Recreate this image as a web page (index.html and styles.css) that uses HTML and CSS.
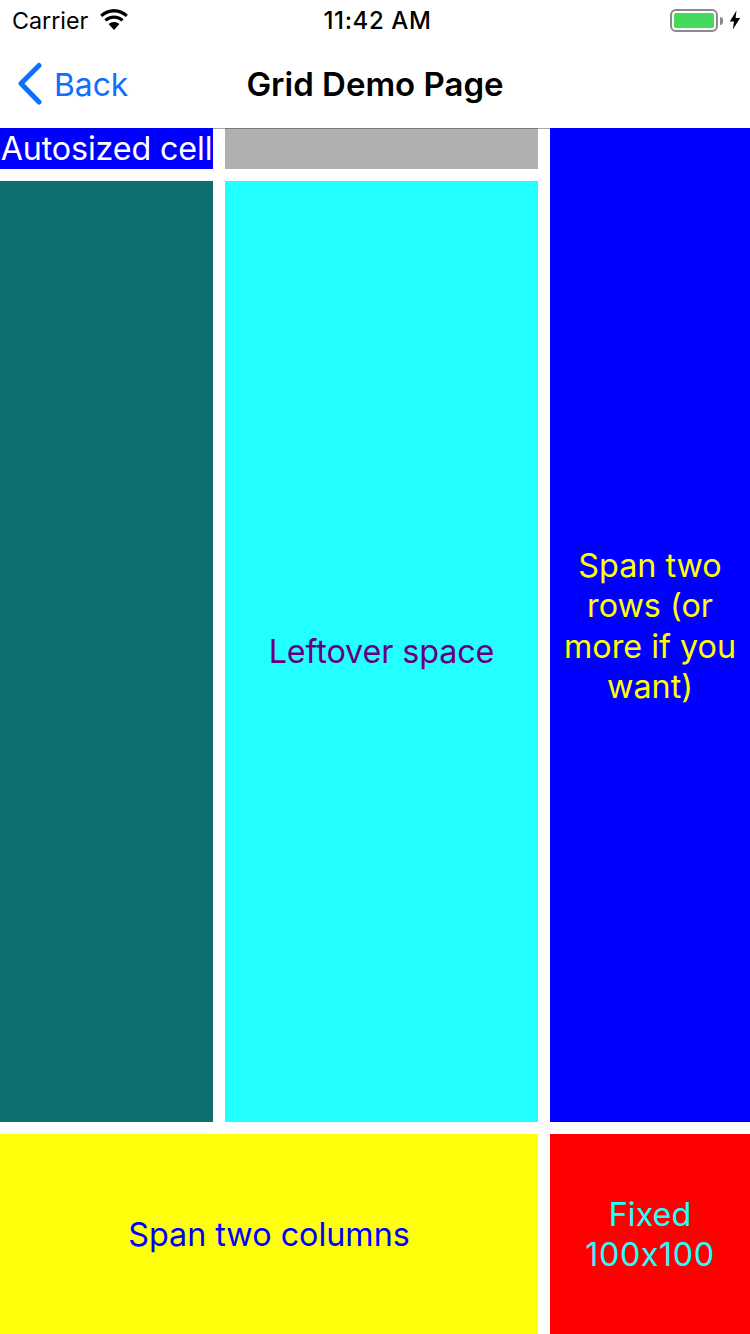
FILE: index.html
```html
<!DOCTYPE html>
<html lang="en">
<head>
<meta charset="utf-8">
<title>Grid Demo Page</title>
<link rel="stylesheet" href="styles.css">
</head>
<body>
<div class="app">
  <div class="status">
    <div class="status-left">
      <span class="carrier">Carrier</span>
      <svg class="wifi" width="28" height="21" viewBox="2 1 26 19.500"><path d="M15 4.200c4.200 0 8 1.600 10.900 4.300l2-2.200C24.300 3 19.900 1 15 1S5.700 3 2.100 6.300l2 2.200C7 5.800 10.800 4.200 15 4.200z" fill="#000"/><path d="M15 10c2.700 0 5.100 1 7 2.700l2-2.200C21.600 8.300 18.500 7 15 7s-6.600 1.300-9 3.500l2 2.200c1.900-1.700 4.300-2.700 7-2.700z" fill="#000"/><path d="M15 13c-1.900 0-3.700.7-5 1.900l5 5.600 5-5.600c-1.300-1.200-3.100-1.900-5-1.900z" fill="#000"/></svg>
    </div>
    <span class="time">11:42 AM</span>
    <div class="status-right">
      <div class="battery"><div class="battery-fill"></div></div>
      <div class="battery-cap"></div>
      <svg class="bolt" width="12" height="20" viewBox="0 0 12 20"><path d="M7.500 0.500L0.800 11.500h4.200L3.800 19.500l7.400-11.500H6.600z" fill="#000"/></svg>
    </div>
  </div>
  <nav class="nav">
    <div class="back">
      <svg class="chevron" width="28" height="44" viewBox="0 0 28 44"><path d="M24 3.500L6 21.500 24 40" fill="none" stroke="#0f6ffb" stroke-width="5" stroke-linecap="round" stroke-linejoin="round"/></svg>
      <span>Back</span>
    </div>
    <div class="title">Grid Demo Page</div>
  </nav>
  <main class="grid">
    <div class="cell auto">Autosized cell</div>
    <div class="cell gray"></div>
    <div class="cell span-rows">Span two rows (or more if you want)</div>
    <div class="cell teal"></div>
    <div class="cell leftover">Leftover space</div>
    <div class="cell span-cols">Span two columns</div>
    <div class="cell fixed"><span>Fixed <span class="dims">100x100</span></span></div>
  </main>
</div>
</body>
</html>
```
FILE: styles.css
```css
* { box-sizing: border-box; }
html, body { margin: 0; padding: 0; background: #fff; }
body { font-family: Inter, "Liberation Sans", sans-serif; font-feature-settings: "calt" 0; }
.app { width: 750px; height: 1334px; display: flex; flex-direction: column; overflow: hidden; }
.status { height: 40px; position: relative; display: flex; align-items: center; justify-content: space-between; color: #000; }
.status-left { display: flex; align-items: center; padding-left: 12px; gap: 12px; }
.carrier { font-size: 23.300px; line-height: 40px; padding-top: 1px; }
.wifi { margin-top: -1px; }
.time { position: absolute; left: 0; right: 0; padding-left: 5px; text-align: center; font-size: 24px; font-weight: 500; letter-spacing: 0.600px; line-height: 43px; pointer-events: none; }
.status-right { display: flex; align-items: center; padding-right: 9px; }
.battery { width: 48px; height: 23px; margin-top: 1px; border: 2px solid #8a8a8a; border-radius: 6px; padding: 2px; }
.battery-fill { height: 100%; background: #43d95b; border-radius: 2px; }
.battery-cap { width: 3px; height: 8px; background: #8a8a8a; border-radius: 0 3px 3px 0; margin-left: 2.500px; margin-right: 6px; margin-top: 1px; }
.nav { height: 88px; position: relative; display: flex; align-items: center; }
.back { display: flex; align-items: center; padding-left: 15px; gap: 11px; color: #0f6ffb; font-size: 31.800px; line-height: 44px; }
.back span { padding-top: 2px; }
.chevron { flex: none; margin-top: -1px; }
.title { position: absolute; left: 0; right: 0; text-align: center; font-size: 33px; font-weight: 600; color: #000; line-height: 90px; }
.grid { flex: 1; display: grid; grid-template-columns: 213px 313px 200px; grid-template-rows: 41px 941px 200px; gap: 12px; box-shadow: inset 0 1px 0 #a8a8a8; }
.cell { display: flex; align-items: center; justify-content: center; text-align: center; font-size: 32.300px; line-height: 40.500px; padding-top: 2px; }
.auto { background: #0000ff; color: #fff; white-space: nowrap; letter-spacing: -0.150px; }
.gray { background: #b0b0b0; box-shadow: inset 0 1px 0 #7a7a7a; }
.span-rows { background: #0000ff; color: #ffff00; grid-row: 1 / span 2; grid-column: 3; padding-top: 3px; }
.teal { background: #0f6e6e; }
.leftover { background: #22ffff; color: #660080; letter-spacing: -0.100px; }
.span-cols { background: #ffff0a; color: #0000ff; grid-column: 1 / span 2; }
.fixed { background: #ff0000; color: #22ffff; }
.dims { letter-spacing: 0.600px; }
```
